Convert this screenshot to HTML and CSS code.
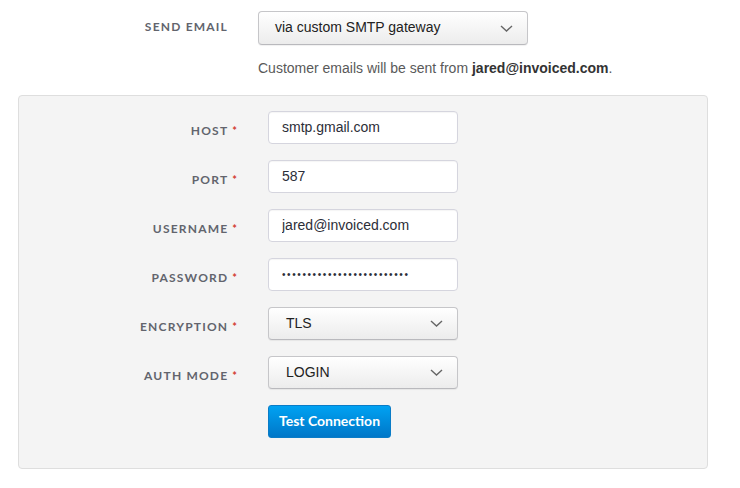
FILE: index.html
```html
<!DOCTYPE html>
<html>
<head>
<meta charset="utf-8">
<link rel="stylesheet" href="styles.css">
</head>
<body>
<div class="page">
  <div class="top-row">
    <div class="label top-label">SEND EMAIL</div>
    <div class="select select-top">
      <span>via custom SMTP gateway</span>
      <svg class="chev" width="13" height="7" viewBox="0 0 13 7"><path d="M1 1 L6.5 6 L12 1" fill="none" stroke="#666" stroke-width="1.4"/></svg>
    </div>
  </div>
  <p class="note">Customer emails will be sent from <b>jared@invoiced.com</b>.</p>
  <div class="panel">
    <div class="label">HOST<span class="req">*</span></div>
    <input class="field" type="text" value="smtp.gmail.com">
    <div class="label">PORT<span class="req">*</span></div>
    <input class="field" type="text" value="587">
    <div class="label">USERNAME<span class="req">*</span></div>
    <input class="field" type="text" value="jared@invoiced.com">
    <div class="label">PASSWORD<span class="req">*</span></div>
    <input class="field pw" type="password" value="xxxxxxxxxxxxxxxxxxxxxxxxx">
    <div class="label">ENCRYPTION<span class="req">*</span></div>
    <div class="select">
      <span>TLS</span>
      <svg class="chev" width="13" height="7" viewBox="0 0 13 7"><path d="M1 1 L6.5 6 L12 1" fill="none" stroke="#666" stroke-width="1.4"/></svg>
    </div>
    <div class="label">AUTH MODE<span class="req">*</span></div>
    <div class="select">
      <span>LOGIN</span>
      <svg class="chev" width="13" height="7" viewBox="0 0 13 7"><path d="M1 1 L6.5 6 L12 1" fill="none" stroke="#666" stroke-width="1.4"/></svg>
    </div>
    <button class="btn" type="button">Test Connection</button>
  </div>
</div>
</body>
</html>
```
FILE: styles.css
```css
* { box-sizing: border-box; }
html, body { margin: 0; padding: 0; background: #fff; }
body { font-family: "Liberation Sans", Arial, sans-serif; font-size: 14px; color: #333; }

.page { width: 740px; height: 488px; padding-top: 11px; }

.top-row {
  display: grid;
  grid-template-columns: 228px 270px;
  column-gap: 30px;
  align-items: center;
}

.label {
  font-family: Lato, "Open Sans", sans-serif;
  font-weight: 700;
  font-size: 12px;
  letter-spacing: 1.2px;
  color: #62646d;
  text-align: right;
  padding-top: 12px;
  padding-right: 1px;
  white-space: nowrap;
}
.top-label { padding-top: 0; padding-bottom: 3px; padding-right: 0; }

.req {
  color: #d23a2f;
  font-size: 11px;
  letter-spacing: 0;
  margin-left: 4px;
}

.select {
  height: 34px;
  border: 1px solid #c6c6c9;
  border-bottom-color: #b9b9bd;
  border-radius: 4px;
  background: linear-gradient(#ffffff, #ececec);
  box-shadow: 0 1px 1px rgba(0,0,0,0.06);
  display: flex;
  align-items: center;
  justify-content: space-between;
  padding: 0 14px 2px 17px;
  font-size: 14px;
  color: #222;
}
.select-top { padding-left: 16px; }
.chev { display: block; margin-top: 2px; }

.note {
  margin: 13px 0 0 258px;
  line-height: 20px;
  color: #595959;
}
.note b { color: #333; }

.panel {
  margin: 17px 0 0 18px;
  width: 690px;
  background: #f4f4f4;
  border: 1px solid #dedede;
  border-radius: 4px;
  display: grid;
  grid-template-columns: 219px 190px;
  column-gap: 30px;
  row-gap: 16px;
  padding: 15px 0 30px 0;
}
.panel .select { height: 33px; }

.field {
  height: 33px;
  width: 190px;
  margin: 0;
  border: 1px solid #d5d5de;
  border-radius: 4px;
  background: #fff;
  box-shadow: inset 0 1px 1px rgba(0,0,0,0.04);
  padding: 0 12px 2px 13px;
  font-family: "Liberation Sans", Arial, sans-serif;
  font-size: 14px;
  color: #2c2e38;
  outline: none;
}
.pw {
  font-size: 10px;
  letter-spacing: 1.6px;
  padding-bottom: 1px;
}

.btn {
  grid-column: 2;
  justify-self: start;
  width: 123px;
  height: 33px;
  margin: 0;
  border: 1px solid #0a7cc7;
  border-radius: 3px;
  background: linear-gradient(#00a2f2, #0077c8);
  color: #fff;
  font-family: Lato, "Open Sans", sans-serif;
  font-weight: 700;
  font-size: 14px;
  padding: 0 0 2px 0;
  cursor: pointer;
}
```
